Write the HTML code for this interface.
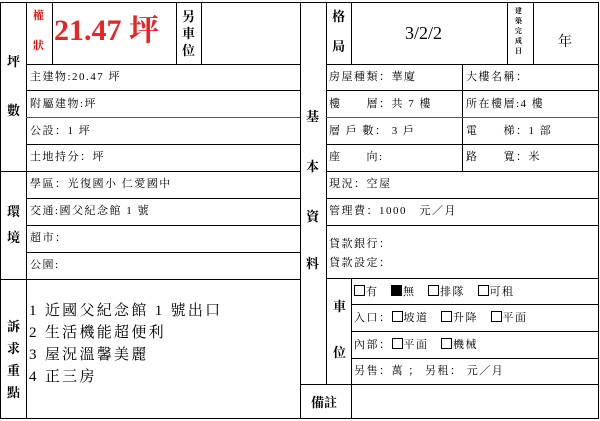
<!DOCTYPE html><html><head><meta charset="utf-8"><style>
body{margin:0;width:600px;height:421px;background:#fff;overflow:hidden;font-family:"Liberation Serif","Noto Serif CJK SC","Noto Sans CJK TC",serif;color:#000}
.h{position:absolute;height:1px;background:#000}
.v{position:absolute;width:1px;background:#000}
.t{position:absolute;font-size:11px;white-space:nowrap;line-height:13px;letter-spacing:1.5px}
.b{font-weight:bold;font-size:13px;letter-spacing:0}
.bx{display:inline-block;width:9px;height:9px;border:1px solid #000;vertical-align:-1px;margin-right:1px}
</style></head><body>
<div class="h" style="left:0;top:2px;width:599px"></div>
<div class="h" style="left:0;top:418px;width:599px"></div>
<div class="v" style="left:0;top:2px;height:417px"></div>
<div class="v" style="left:598px;top:2px;height:417px"></div>
<div class="v" style="left:300px;top:2px;height:417px"></div>
<div class="v" style="left:26px;top:2px;height:416px"></div>
<div class="v" style="left:52px;top:2px;height:62px"></div>
<div class="v" style="left:176px;top:2px;height:62px"></div>
<div class="v" style="left:201px;top:2px;height:62px"></div>
<div class="h" style="left:26px;top:64px;width:274px"></div>
<div class="h" style="left:26px;top:90px;width:274px"></div>
<div class="h" style="left:26px;top:117px;width:274px;background:#555"></div>
<div class="h" style="left:26px;top:144px;width:274px"></div>
<div class="h" style="left:0;top:171px;width:300px"></div>
<div class="h" style="left:26px;top:198px;width:274px"></div>
<div class="h" style="left:26px;top:225px;width:274px"></div>
<div class="h" style="left:26px;top:252px;width:274px"></div>
<div class="h" style="left:0;top:279px;width:300px"></div>
<div class="t b" style="left:7px;top:55px">坪</div>
<div class="t b" style="left:7px;top:104px">數</div>
<div class="t" style="left:33px;top:10px;color:#e00;font-weight:bold">權</div>
<div class="t" style="left:33px;top:40px;color:#e00;font-weight:bold">狀</div>
<div class="t" style="left:54px;top:14px;color:#e22;font-size:30px;line-height:34px;font-weight:bold;letter-spacing:0">21.47 坪</div>
<div class="t b" style="left:182px;top:8px;line-height:17px">另<br>車<br>位</div>
<div class="t" style="left:30px;top:71px">主建物:20.47 坪</div>
<div class="t" style="left:30px;top:98px">附屬建物:坪</div>
<div class="t" style="left:30px;top:125px">公設：1 坪</div>
<div class="t" style="left:30px;top:151px">土地持分：坪</div>
<div class="t b" style="left:7px;top:205px">環</div>
<div class="t b" style="left:7px;top:231px">境</div>
<div class="t" style="left:30px;top:178px">學區：光復國小 仁愛國中</div>
<div class="t" style="left:30px;top:205px">交通:國父紀念館 1 號</div>
<div class="t" style="left:30px;top:232px">超市：</div>
<div class="t" style="left:30px;top:259px">公園:</div>
<div class="t b" style="left:7px;top:316px;line-height:22px">訴<br>求<br>重<br>點</div>
<div class="t" style="left:29px;top:300px;font-size:15px;line-height:22px;letter-spacing:2.3px">1 近國父紀念館 1 號出口<br>2 生活機能超便利<br>3 屋況溫馨美麗<br>4 正三房</div>
<div class="v" style="left:326px;top:2px;height:382px"></div>
<div class="v" style="left:351px;top:2px;height:62px"></div>
<div class="v" style="left:507px;top:2px;height:62px"></div>
<div class="v" style="left:533px;top:2px;height:62px"></div>
<div class="v" style="left:462px;top:64px;height:107px"></div>
<div class="v" style="left:351px;top:279px;height:139px"></div>
<div class="h" style="left:326px;top:64px;width:272px"></div>
<div class="h" style="left:326px;top:90px;width:272px"></div>
<div class="h" style="left:326px;top:117px;width:272px;background:#555"></div>
<div class="h" style="left:326px;top:144px;width:272px"></div>
<div class="h" style="left:326px;top:171px;width:272px"></div>
<div class="h" style="left:326px;top:198px;width:272px"></div>
<div class="h" style="left:326px;top:225px;width:272px"></div>
<div class="h" style="left:326px;top:278px;width:272px"></div>
<div class="h" style="left:351px;top:304px;width:247px"></div>
<div class="h" style="left:351px;top:331px;width:247px"></div>
<div class="h" style="left:351px;top:358px;width:247px"></div>
<div class="h" style="left:300px;top:384px;width:298px"></div>
<div class="t b" style="left:332px;top:10px">格</div>
<div class="t b" style="left:332px;top:40px">局</div>
<div class="t" style="left:405px;top:23px;font-size:18px;line-height:20px;letter-spacing:0">3/2/2</div>
<div class="t" style="left:515px;top:6px;font-size:7px;line-height:10px;font-weight:bold">建<br>築<br>完<br>成<br>日</div>
<div class="t" style="left:558px;top:36px;font-size:14px">年</div>
<div class="t b" style="left:306px;top:110px">基</div>
<div class="t b" style="left:306px;top:160px">本</div>
<div class="t b" style="left:306px;top:210px">資</div>
<div class="t b" style="left:306px;top:257px">料</div>
<div class="t" style="left:329px;top:71px">房屋種類：華廈</div>
<div class="t" style="left:466px;top:71px">大樓名稱：</div>
<div class="t" style="left:329px;top:98px">樓　　層：共 7 樓</div>
<div class="t" style="left:466px;top:98px">所在樓層:4 樓</div>
<div class="t" style="left:329px;top:125px">層 戶 數： 3 戶</div>
<div class="t" style="left:466px;top:125px">電　　梯：1 部</div>
<div class="t" style="left:329px;top:151px">座　　向:</div>
<div class="t" style="left:466px;top:151px">路　　寬：米</div>
<div class="t" style="left:329px;top:178px">現況：空屋</div>
<div class="t" style="left:329px;top:205px">管理費：1000　元／月</div>
<div class="t" style="left:329px;top:235px;line-height:19px">貸款銀行：<br>貸款設定：</div>
<div class="t b" style="left:333px;top:300px">車</div>
<div class="t b" style="left:333px;top:346px">位</div>
<div class="t" style="left:354px;top:285px"><span class="bx"></span>有　<span class="bx" style="background:#000"></span>無　<span class="bx"></span>排隊　<span class="bx"></span>可租</div>
<div class="t" style="left:354px;top:311px">入口：<span class="bx"></span>坡道　<span class="bx"></span>升降　<span class="bx"></span>平面</div>
<div class="t" style="left:354px;top:338px">內部：<span class="bx"></span>平面　<span class="bx"></span>機械</div>
<div class="t" style="left:354px;top:365px">另售：萬 ； 另租： 元／月</div>
<div class="t b" style="left:311px;top:396px">備註</div>
</body></html>
